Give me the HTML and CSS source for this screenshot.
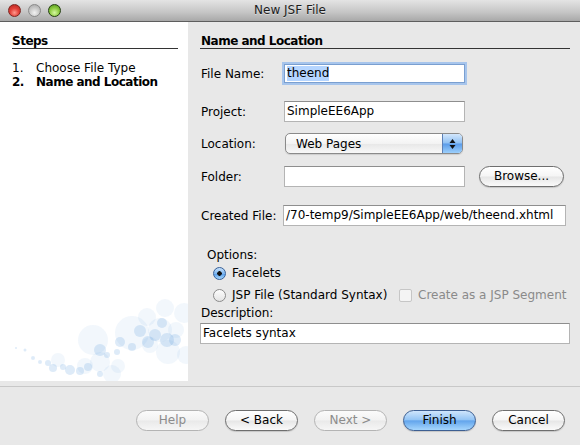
FILE: index.html
```html
<!DOCTYPE html>
<html>
<head>
<meta charset="utf-8">
<title>New JSF File</title>
<link rel="stylesheet" href="styles.css">
</head>
<body>
<div class="window">
  <header class="titlebar">
    <div class="lights">
      <span class="light red"></span>
      <span class="light gray"></span>
      <span class="light green"></span>
    </div>
    <div class="title">New JSF File</div>
    <div></div>
  </header>

  <div class="main">
    <aside class="steps">
      <h2 class="heading">Steps</h2>
      <ol class="step-list">
        <li><span class="num">1.</span>Choose File Type</li>
        <li class="current"><span class="num">2.</span>Name and Location</li>
      </ol>
      <svg class="bubbles" width="188" height="95" viewBox="0 286 188 95" aria-hidden="true">
        <g fill="#4a90d9" fill-opacity="0.07">
          <circle cx="93" cy="340" r="15"/>
          <circle cx="132" cy="333" r="17"/>
          <circle cx="147" cy="317" r="9"/>
          <circle cx="165" cy="308" r="9"/>
          <circle cx="184" cy="313" r="10"/>
          <circle cx="168" cy="352" r="12"/>
          <circle cx="100" cy="362" r="10"/>
          <circle cx="118" cy="366" r="7"/>
          <circle cx="85" cy="366" r="8"/>
          <circle cx="58" cy="360" r="7"/>
          <circle cx="160" cy="330" r="12"/>
          <circle cx="150" cy="345" r="8"/>
          <circle cx="176" cy="330" r="8"/>
          <circle cx="186" cy="355" r="9"/>
          <circle cx="112" cy="374" r="9"/>
        </g>
        <g fill="#4a90d9" fill-opacity="0.18">
          <circle cx="100" cy="350" r="6"/>
          <circle cx="120" cy="342" r="5"/>
          <circle cx="140" cy="331" r="6"/>
          <circle cx="148" cy="342" r="6"/>
          <circle cx="167" cy="340" r="7"/>
          <circle cx="155" cy="335" r="6"/>
          <circle cx="132" cy="347" r="4"/>
          <circle cx="117" cy="352" r="3"/>
          <circle cx="107" cy="355" r="3"/>
          <circle cx="48" cy="363" r="3"/>
          <circle cx="33" cy="358" r="2"/>
          <circle cx="25" cy="350" r="1.5"/>
          <circle cx="16" cy="348" r="1"/>
          <circle cx="40" cy="362" r="2"/>
          <circle cx="53" cy="368" r="4"/>
          <circle cx="63" cy="367" r="3"/>
          <circle cx="70" cy="370" r="5"/>
          <circle cx="80" cy="371" r="4"/>
          <circle cx="88" cy="367" r="4"/>
          <circle cx="100" cy="374" r="3"/>
          <circle cx="175" cy="340" r="6"/>
          <circle cx="162" cy="323" r="5"/>
        </g>
      </svg>
    </aside>

    <section class="content">
      <h2 class="heading">Name and Location</h2>

      <div class="row row-filename">
        <span class="label">File Name:</span>
        <div class="field focused"><span class="selected">theend</span></div>
      </div>

      <div class="row row-project">
        <span class="label">Project:</span>
        <div class="field">SimpleEE6App</div>
      </div>

      <div class="row row-location">
        <span class="label">Location:</span>
        <div class="select">
          <span class="select-text">Web Pages</span>
          <span class="stepper">
            <svg width="7" height="12" viewBox="0 0 7 12"><polygon points="3.5,1 6.5,5 0.5,5" fill="#111"/><polygon points="0.5,7 6.5,7 3.5,11" fill="#111"/></svg>
          </span>
        </div>
      </div>

      <div class="row row-folder">
        <span class="label">Folder:</span>
        <div class="field"></div>
        <button class="btn browse">Browse...</button>
      </div>

      <div class="row row-created">
        <span class="label">Created File:</span>
        <div class="field wide">/70-temp9/SimpleEE6App/web/theend.xhtml</div>
      </div>

      <div class="options-label">Options:</div>
      <div class="opt-row">
        <span class="opt"><span class="radio on"></span>Facelets</span>
      </div>
      <div class="opt-row">
        <span class="opt"><span class="radio"></span>JSP File (Standard Syntax)</span>
        <span class="check-opt"><span class="checkbox"></span>Create as a JSP Segment</span>
      </div>
      <div class="desc-label">Description:</div>
      <div class="field full">Facelets syntax</div>
    </section>
  </div>

  <footer class="buttons">
    <button class="btn disabled">Help</button>
    <button class="btn">&lt; Back</button>
    <button class="btn disabled">Next &gt;</button>
    <button class="btn primary">Finish</button>
    <button class="btn">Cancel</button>
  </footer>
</div>
</body>
</html>
```

FILE: styles.css
```css
html, body {
  margin: 0;
  padding: 0;
}
body {
  width: 580px;
  height: 445px;
  overflow: hidden;
  background: #e8e8e8;
  font-family: "DejaVu Sans", sans-serif;
  font-size: 12px;
  color: #000;
}
.window {
  display: flex;
  flex-direction: column;
  height: 445px;
}

/* title bar */
.titlebar {
  height: 21px;
  border-bottom: 1px solid #5e5e5e;
  background: linear-gradient(#e4e4e4, #c4c4c4 60%, #a8a8a8);
  display: grid;
  grid-template-columns: 1fr auto 1fr;
  align-items: center;
}
.lights {
  display: flex;
  gap: 7px;
  padding-left: 8px;
}
.light {
  width: 13px;
  height: 13px;
  border-radius: 50%;
  box-sizing: border-box;
}
.light.red {
  background: radial-gradient(circle at 50% 70%, #ff9a8e 0, #e3423a 45%, #b0221c 100%);
  border: 1px solid #7e2520;
}
.light.gray {
  background: radial-gradient(circle at 50% 70%, #f2f2f2 0, #c9c9c9 50%, #a2a2a2 100%);
  border: 1px solid #8a8a8a;
}
.light.green {
  background: radial-gradient(circle at 50% 70%, #d6f7a2 0, #8ccb3f 50%, #4f8f1c 100%);
  border: 1px solid #23400f;
}
.title {
  line-height: 21px;
  color: #1c1c1c;
  text-shadow: 0 1px 0 rgba(255, 255, 255, 0.45);
}

/* main */
.main {
  display: flex;
  height: 364px;
}
.steps {
  width: 188px;
  flex: none;
  background: #fff;
  margin-bottom: 5px;
  display: flex;
  flex-direction: column;
}
.steps .heading {
  margin: 12px 10px 0 12px;
}
.heading {
  margin: 12px 0 0 0;
  height: 14px;
  line-height: 14px;
  font-size: 12px;
  font-weight: bold;
  letter-spacing: -0.5px;
  border-bottom: 1px solid #333;
}
.content .heading {
  padding-left: 1px;
}
.step-list {
  list-style: none;
  margin: 12px 0 0 12px;
  padding: 0;
}
.step-list li {
  line-height: 14px;
  display: flex;
}
.step-list .num {
  width: 24px;
  flex: none;
}
.step-list .current {
  font-weight: bold;
  letter-spacing: -0.5px;
}
.bubbles {
  margin-top: auto;
  display: block;
}

.content {
  flex: 1;
  padding: 0 10px 0 12px;
}

/* form rows */
.row {
  display: flex;
  align-items: center;
}
.label {
  width: 84px;
  flex: none;
  padding-left: 1px;
  box-sizing: border-box;
}
.row-filename { margin-top: 15px; }
.row-project { margin-top: 18px; }
.row-location { margin-top: 11px; }
.row-folder { margin-top: 12px; }
.row-created { margin-top: 18px; }

.field {
  width: 181px;
  height: 21px;
  box-sizing: border-box;
  background: #fff;
  border: 1px solid #b4b4b4;
  border-top-color: #8e8e8e;
  padding: 0 2px;
  line-height: 19px;
  white-space: nowrap;
  overflow: hidden;
}
.field.focused {
  height: 19px;
  border-color: #7a9fd0;
  box-shadow: 0 0 0 2px #a7c5ec;
  line-height: 17px;
}
.selected {
  background: #b5d5ff;
  display: inline-block;
  line-height: 15px;
}
.field.wide {
  width: 283px;
  margin-left: -1px;
}
.field.full {
  width: 100%;
  margin-top: 3px;
}

.select {
  width: 178px;
  height: 21px;
  margin-left: 1px;
  box-sizing: border-box;
  border: 1px solid #8a8a8a;
  border-radius: 5px;
  background: linear-gradient(#ffffff, #f3f3f3 50%, #e7e7e7 51%, #f8f8f8);
  display: flex;
  align-items: center;
  overflow: hidden;
  box-shadow: 0 1px 1px rgba(0, 0, 0, 0.12);
}
.select-text {
  flex: 1;
  padding-left: 10px;
}
.stepper {
  width: 19px;
  align-self: stretch;
  border-left: 1px solid #5d80b6;
  background: linear-gradient(#d3e7fc, #8fc0f3 48%, #5a9be9 52%, #9ccffb);
  display: flex;
  align-items: center;
  justify-content: center;
}
.stepper svg {
  display: block;
}

/* buttons */
.btn {
  width: 73px;
  height: 21px;
  box-sizing: border-box;
  padding: 0;
  border: 1px solid #6e6e6e;
  border-radius: 11px;
  background: linear-gradient(#ffffff, #f5f5f5 48%, #e6e6e6 52%, #fafafa);
  font-family: "DejaVu Sans", sans-serif;
  font-size: 12px;
  line-height: 19px;
  color: #000;
  text-align: center;
  box-shadow: 0 1px 1px rgba(0, 0, 0, 0.15);
}
.btn.browse {
  width: 85px;
  margin-left: 14px;
}
.btn.disabled {
  border-color: #b4b4b4;
  color: #8c8c8c;
  background: linear-gradient(#fbfbfb, #f2f2f2 48%, #e9e9e9 52%, #f6f6f6);
  box-shadow: none;
}
.btn.primary {
  border-color: #3d5f92;
  background: linear-gradient(#cfe5fc, #94c5f5 46%, #63a5ec 52%, #a6d6fd);
}

/* options */
.options-label {
  margin-top: 22px;
  padding-left: 7px;
  line-height: 14px;
}
.opt-row {
  height: 22px;
  display: flex;
  align-items: center;
  padding-left: 13px;
}
.opt-row:first-of-type {
  margin-top: 1px;
}
.opt {
  width: 186px;
  flex: none;
  display: flex;
  align-items: center;
  gap: 6px;
}
.radio {
  width: 13px;
  height: 13px;
  box-sizing: border-box;
  border-radius: 50%;
  border: 1px solid #8b8b8b;
  background: linear-gradient(#fdfdfd, #e4e4e4);
  flex: none;
}
.radio.on {
  border-color: #375f97;
  background: radial-gradient(circle at 50% 50%, #111 0, #111 2px, transparent 2.5px),
              linear-gradient(#c8e2fb, #7db6f0 50%, #5ba0ea 55%, #a6d6fc);
}
.check-opt {
  display: flex;
  align-items: center;
  gap: 6px;
  color: #8a8a8a;
}
.checkbox {
  width: 13px;
  height: 13px;
  box-sizing: border-box;
  border: 1px solid #c6c6c6;
  border-radius: 2px;
  background: #f4f4f4;
  flex: none;
}
.desc-label {
  line-height: 14px;
  padding-left: 1px;
}

/* footer */
.buttons {
  border-top: 1px solid #c8c8c8;
  display: flex;
  justify-content: flex-end;
  gap: 16px;
  padding: 23px 15px 0 0;
}
```
